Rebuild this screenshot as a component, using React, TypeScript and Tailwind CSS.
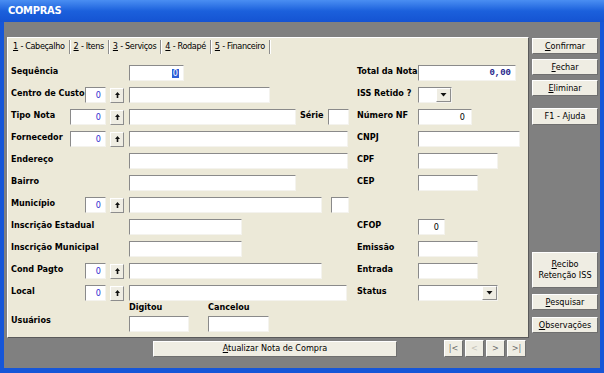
import React from "react";

const font = "font-['DejaVu_Sans_Condensed','Liberation_Sans',sans-serif]";

function Field({ className = "", children }: { className?: string; children?: React.ReactNode }) {
  return (
    <div
      className={`h-[16px] bg-white border-t border-l border-t-[#8a8a8a] border-l-[#8a8a8a] border-b border-r border-b-[#f4f3ee] border-r-[#f4f3ee] flex items-center justify-end pr-[4px] text-[9px] leading-none ${className}`}
    >
      {children}
    </div>
  );
}

function UpBtn() {
  return (
    <div className="w-[14px] h-[15px] mr-[5px] bg-[#efede3] border-t border-l border-white border-b border-r border-b-[#8d8d8d] border-r-[#8d8d8d] flex items-center justify-center">
      <svg width="7" height="8" viewBox="0 0 7 8">
        <path d="M3.5 1L6 4H4.3V7H2.7V4H1Z" fill="#111" />
      </svg>
    </div>
  );
}

function Combo({ className = "" }: { className?: string }) {
  return (
    <div
      className={`h-[16px] bg-white border-t border-l border-[#8a8a8a] border-b border-r border-b-[#f4f3ee] border-r-[#f4f3ee] flex justify-end ${className}`}
    >
      <div className="w-[15px] h-full bg-[#efede3] border-t border-l border-white border-b border-r border-b-[#8d8d8d] border-r-[#8d8d8d] flex items-center justify-center">
        <svg width="7" height="4" viewBox="0 0 7 4">
          <path d="M0.5 0H6.5L3.5 3.5Z" fill="#111" />
        </svg>
      </div>
    </div>
  );
}

function Lbl({ children, className = "" }: { children: React.ReactNode; className?: string }) {
  return <span className={`text-[9px] font-bold text-black whitespace-nowrap pb-[2px] ${className}`}>{children}</span>;
}

function Code({ w }: { w: "sm" | "lg" }) {
  return (
    <Field className={`${w === "sm" ? "w-[21px]" : "w-[36px]"} mr-[4px] text-[#2b2bd0]`}>0</Field>
  );
}

function Btn({ children, className = "" }: { children: React.ReactNode; className?: string }) {
  return (
    <div
      className={`bg-[#efede3] border-t border-l border-white border-b border-r border-b-[#6f6f6f] border-r-[#6f6f6f] flex items-center justify-center text-center text-[9px] leading-[11px] ${className}`}
    >
      {children}
    </div>
  );
}

function Row({ left, right }: { left: React.ReactNode; right?: React.ReactNode }) {
  return (
    <div className="h-[22px] flex items-center">
      <div className="w-[346px] flex items-center">{left}</div>
      <div className="flex items-center">{right}</div>
    </div>
  );
}

function LeftHead({ label, code }: { label: string; code?: "sm" | "lg" }) {
  return (
    <div className="w-[118px] flex items-center">
      <Lbl className="flex-1">{label}</Lbl>
      {code && <Code w={code} />}
      {code && <UpBtn />}
    </div>
  );
}

function RightHead({ label }: { label: string }) {
  return <Lbl className="w-[61px]">{label}</Lbl>;
}

const tabs = [
  ["1", " - Cabeçalho"],
  ["2", " - Itens"],
  ["3", " - Serviços"],
  ["4", " - Rodapé"],
  ["5", " - Financeiro"],
];

export default function App() {
  return (
    <div className={`w-[604px] h-[373px] bg-[#1656d8] flex flex-col ${font}`}>
      {/* title bar */}
      <div className="h-[22px] bg-gradient-to-b from-[#4a8ef2] via-[#1b60dc] to-[#1553d2] flex items-center pl-[8px]">
        <span className="text-white font-bold text-[11px] tracking-tight">COMPRAS</span>
      </div>

      <div className="flex-1 mx-[4px] mb-[5px] bg-[#808080] flex pt-[15px]">
        {/* main column */}
        <div className="ml-[3px] w-[522px] flex flex-col">
          <div className="h-[301px] bg-[#ece9d8] border-t border-l border-white border-b border-r border-b-[#5a5a5a] border-r-[#5a5a5a] flex flex-col">
            {/* tabs */}
            <div className="h-[17px] flex items-center pt-[1px] text-[9px] text-black">
              {tabs.map(([n, t]) => (
                <div key={n} className="flex items-center h-[14px] px-[4px] first:pl-[5px] border-r border-r-[#8d8d8d] shadow-[1px_0_0_#ffffff]">
                  <span className="underline">{n}</span>
                  <span className="whitespace-pre tracking-[-0.35px]">{t}</span>
                </div>
              ))}
            </div>

            {/* form */}
            <div className="pl-[3px] pt-[7px] flex flex-col">
              <Row
                left={
                  <>
                    <LeftHead label="Sequência" />
                    <Field className="w-[55px] pr-[1px]">
                      <span className="bg-[#2f5fd8] text-white px-[1px]">0</span>
                    </Field>
                  </>
                }
                right={
                  <>
                    <RightHead label="Total da Nota" />
                    <Field className="w-[98px] font-['Liberation_Mono',monospace] font-bold text-[#1c1c8a]">0,00</Field>
                  </>
                }
              />
              <Row
                left={
                  <>
                    <LeftHead label="Centro de Custo" code="sm" />
                    <Field className="w-[141px]" />
                  </>
                }
                right={
                  <>
                    <RightHead label="ISS Retido ?" />
                    <Combo className="w-[34px]" />
                  </>
                }
              />
              <Row
                left={
                  <>
                    <LeftHead label="Tipo Nota" code="lg" />
                    <Field className="w-[167px]" />
                    <Lbl className="ml-[4px] mr-[4px]">Série</Lbl>
                    <Field className="w-[21px]" />
                  </>
                }
                right={
                  <>
                    <RightHead label="Número NF" />
                    <Field className="w-[54px] pr-[6px]">0</Field>
                  </>
                }
              />
              <Row
                left={
                  <>
                    <LeftHead label="Fornecedor" code="lg" />
                    <Field className="w-[219px]" />
                  </>
                }
                right={
                  <>
                    <RightHead label="CNPJ" />
                    <Field className="w-[102px]" />
                  </>
                }
              />
              <Row
                left={
                  <>
                    <LeftHead label="Endereço" />
                    <Field className="w-[219px]" />
                  </>
                }
                right={
                  <>
                    <RightHead label="CPF" />
                    <Field className="w-[80px]" />
                  </>
                }
              />
              <Row
                left={
                  <>
                    <LeftHead label="Bairro" />
                    <Field className="w-[167px]" />
                  </>
                }
                right={
                  <>
                    <RightHead label="CEP" />
                    <Field className="w-[60px]" />
                  </>
                }
              />
              <Row
                left={
                  <>
                    <LeftHead label="Município" code="sm" />
                    <Field className="w-[193px]" />
                    <Field className="w-[18px] ml-[9px]" />
                  </>
                }
              />
              <Row
                left={
                  <>
                    <LeftHead label="Inscrição Estadual" />
                    <Field className="w-[113px]" />
                  </>
                }
                right={
                  <>
                    <RightHead label="CFOP" />
                    <Field className="w-[27px] pr-[5px]">0</Field>
                  </>
                }
              />
              <Row
                left={
                  <>
                    <LeftHead label="Inscrição Municipal" />
                    <Field className="w-[113px]" />
                  </>
                }
                right={
                  <>
                    <RightHead label="Emissão" />
                    <Field className="w-[60px]" />
                  </>
                }
              />
              <Row
                left={
                  <>
                    <LeftHead label="Cond Pagto" code="sm" />
                    <Field className="w-[193px]" />
                  </>
                }
                right={
                  <>
                    <RightHead label="Entrada" />
                    <Field className="w-[60px]" />
                  </>
                }
              />
              <Row
                left={
                  <>
                    <LeftHead label="Local" code="sm" />
                    <Field className="w-[218px]" />
                  </>
                }
                right={
                  <>
                    <RightHead label="Status" />
                    <Combo className="w-[80px]" />
                  </>
                }
              />
              <div className="flex items-end h-[28px]">
                <div className="w-[118px] pb-[2px]">
                  <Lbl>Usuários</Lbl>
                </div>
                <div className="flex flex-col">
                  <Lbl className="pb-[1px]">Digitou</Lbl>
                  <Field className="w-[60px]" />
                </div>
                <div className="flex flex-col ml-[19px]">
                  <Lbl className="pb-[1px]">Cancelou</Lbl>
                  <Field className="w-[61px]" />
                </div>
              </div>
            </div>
          </div>

          {/* bottom bar */}
          <div className="mt-[2px] flex items-center">
            <Btn className="ml-[146px] w-[244px] h-[16px] text-black">
              <span>
                <span className="underline">A</span>tualizar Nota de Compra
              </span>
            </Btn>
            <div className="ml-[47px] flex gap-[2px]">
              <Btn className="w-[19px] h-[17px] text-[#6a6a6a]">|&lt;</Btn>
              <Btn className="w-[19px] h-[17px] text-[#c4c2b8]">&lt;</Btn>
              <Btn className="w-[19px] h-[17px] text-[#6a6a6a]">&gt;</Btn>
              <Btn className="w-[19px] h-[17px] text-[#6a6a6a]">&gt;|</Btn>
            </div>
          </div>
        </div>

        {/* right buttons */}
        <div className="ml-[3px] flex flex-col pt-[1px]">
          <Btn className="w-[66px] h-[16px] text-black">
            <span><span className="underline">C</span>onfirmar</span>
          </Btn>
          <Btn className="w-[66px] h-[16px] mt-[5px] text-black">
            <span><span className="underline">F</span>echar</span>
          </Btn>
          <Btn className="w-[66px] h-[16px] mt-[5px] text-black">
            <span><span className="underline">E</span>liminar</span>
          </Btn>
          <Btn className="w-[66px] h-[17px] mt-[12px] text-black">F1 - Ajuda</Btn>
          <Btn className="w-[66px] h-[36px] mt-[127px] text-black">
            <span>
              <span className="underline">R</span>ecibo
              <br />
              Retenção ISS
            </span>
          </Btn>
          <Btn className="w-[66px] h-[16px] mt-[6px] text-black">
            <span><span className="underline">P</span>esquisar</span>
          </Btn>
          <Btn className="w-[66px] h-[16px] mt-[7px] text-black">
            <span><span className="underline">O</span>bservações</span>
          </Btn>
        </div>
      </div>
    </div>
  );
}
